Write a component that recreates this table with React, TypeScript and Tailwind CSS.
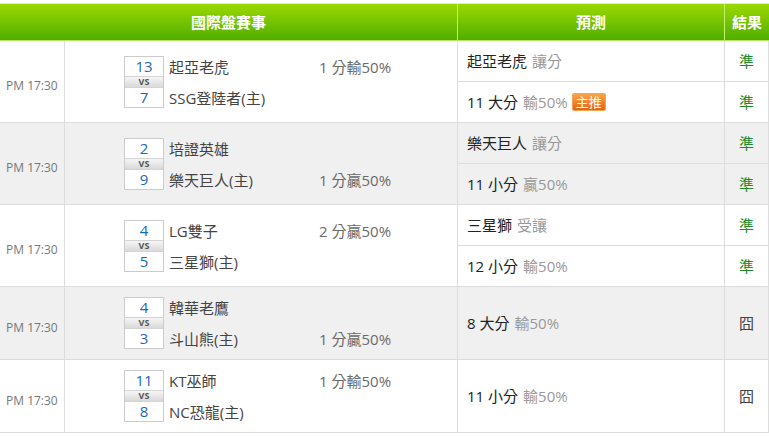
import React from "react";

type Pred = { main: string; sub: string; badge?: boolean; result: "準" | "囧" };
type Match = {
  home: [string, string];
  score: [string, string];
  hcap: string;
  hcapRow: 0 | 1;
  gray: boolean;
  preds: Pred[];
};

const matches: Match[] = [
  {
    home: ["起亞老虎", "SSG登陸者(主)"],
    score: ["13", "7"],
    hcap: "1 分輸50%",
    hcapRow: 0,
    gray: false,
    preds: [
      { main: "起亞老虎", sub: "讓分", result: "準" },
      { main: "11 大分", sub: "輸50%", badge: true, result: "準" },
    ],
  },
  {
    home: ["培證英雄", "樂天巨人(主)"],
    score: ["2", "9"],
    hcap: "1 分贏50%",
    hcapRow: 1,
    gray: true,
    preds: [
      { main: "樂天巨人", sub: "讓分", result: "準" },
      { main: "11 小分", sub: "贏50%", result: "準" },
    ],
  },
  {
    home: ["LG雙子", "三星獅(主)"],
    score: ["4", "5"],
    hcap: "2 分贏50%",
    hcapRow: 0,
    gray: false,
    preds: [
      { main: "三星獅", sub: "受讓", result: "準" },
      { main: "12 小分", sub: "輸50%", result: "準" },
    ],
  },
  {
    home: ["韓華老鷹", "斗山熊(主)"],
    score: ["4", "3"],
    hcap: "1 分贏50%",
    hcapRow: 1,
    gray: true,
    preds: [{ main: "8 大分", sub: "輸50%", result: "囧" }],
  },
  {
    home: ["KT巫師", "NC恐龍(主)"],
    score: ["11", "8"],
    hcap: "1 分輸50%",
    hcapRow: 0,
    gray: false,
    preds: [{ main: "11 小分", sub: "輸50%", result: "囧" }],
  },
];

function ScoreBox({ a, b }: { a: string; b: string }) {
  return (
    <div className="flex w-[40px] flex-col border border-[#cccccc] bg-white">
      <div className="flex h-[19px] items-center justify-center text-[15px] leading-[19px] text-[#1a6ab0]">{a}</div>
      <div className="flex h-[12px] items-center justify-center border-y border-[#d4d4d4] bg-gradient-to-b from-[#f6f6f6] to-[#d9d9d9] text-[9px] font-bold leading-[10px] text-[#555]">
        VS
      </div>
      <div className="flex h-[19px] items-center justify-center text-[15px] leading-[19px] text-[#1a6ab0]">{b}</div>
    </div>
  );
}

export default function App() {
  return (
    <div
      className="w-[769px] bg-white pt-[3px]"
      style={{ fontFamily: '"Open Sans", "Noto Sans CJK TC", sans-serif' }}
    >
      {/* header */}
      <div className="flex h-[38px] border-t border-[#e2e2e2] border-b border-b-[#b8e860] bg-gradient-to-b from-[#9ad900] to-[#4eae00] text-[15px] font-bold text-white">
        <div className="flex w-[458px] items-center justify-center border-r border-[#c2f070]">國際盤賽事</div>
        <div className="flex w-[267px] items-center justify-center border-r border-[#c2f070]">預測</div>
        <div className="flex w-[44px] items-center justify-center">結果</div>
      </div>

      {matches.map((m, i) => {
        const h = m.preds.length === 2 ? "h-[82px]" : "h-[73px]";
        return (
          <div
            key={i}
            className={`flex ${h} border-b border-[#dddddd] ${m.gray ? "bg-[#f0f0f0]" : "bg-white"}`}
          >
            <div className="flex w-[65px] items-center border-r border-[#dddddd] pl-[6px] pt-[9px] text-[12px] text-[#777777]">
              PM 17:30
            </div>
            <div className="flex w-[393px] items-center border-r border-[#dddddd] pl-[59px]">
              <ScoreBox a={m.score[0]} b={m.score[1]} />
              <div className="flex w-[155px] flex-col pl-[5px] pt-[2px] text-[15px] text-[#444444]">
                <div className="flex h-[20px] items-center">{m.home[0]}</div>
                <div className="h-[11px]" />
                <div className="flex h-[20px] items-center">{m.home[1]}</div>
              </div>
              <div className="flex flex-col pt-[2px] text-[15px] text-[#6a6a6a]">
                <div className="flex h-[20px] items-center">{m.hcapRow === 0 ? m.hcap : ""}</div>
                <div className="h-[11px]" />
                <div className="flex h-[20px] items-center">{m.hcapRow === 1 ? m.hcap : ""}</div>
              </div>
            </div>
            <div className="flex w-[311px] flex-col">
              {m.preds.map((p, j) => (
                <div
                  key={j}
                  className={`flex flex-1 ${j < m.preds.length - 1 ? "border-b border-[#dddddd]" : ""}`}
                >
                  <div className="flex w-[267px] items-center border-r border-[#dddddd] pl-[9px] text-[15px]">
                    <span className="text-[#222222]">{p.main}</span>
                    <span className="ml-[5px] text-[#999999]">{p.sub}</span>
                    {p.badge && (
                      <span className="ml-[4px] flex h-[18px] items-center rounded-[2px] border border-[#f3a453] bg-gradient-to-b from-[#f9a547] to-[#e8620c] px-[3px] text-[13px] leading-none text-white">
                        主推
                      </span>
                    )}
                  </div>
                  <div
                    className={`flex w-[44px] items-center justify-center border-r border-[#dddddd] text-[15px] ${
                      p.result === "準" ? "text-[#1e8a2a]" : "text-[#444444]"
                    }`}
                  >
                    {p.result}
                  </div>
                </div>
              ))}
            </div>
          </div>
        );
      })}
    </div>
  );
}
